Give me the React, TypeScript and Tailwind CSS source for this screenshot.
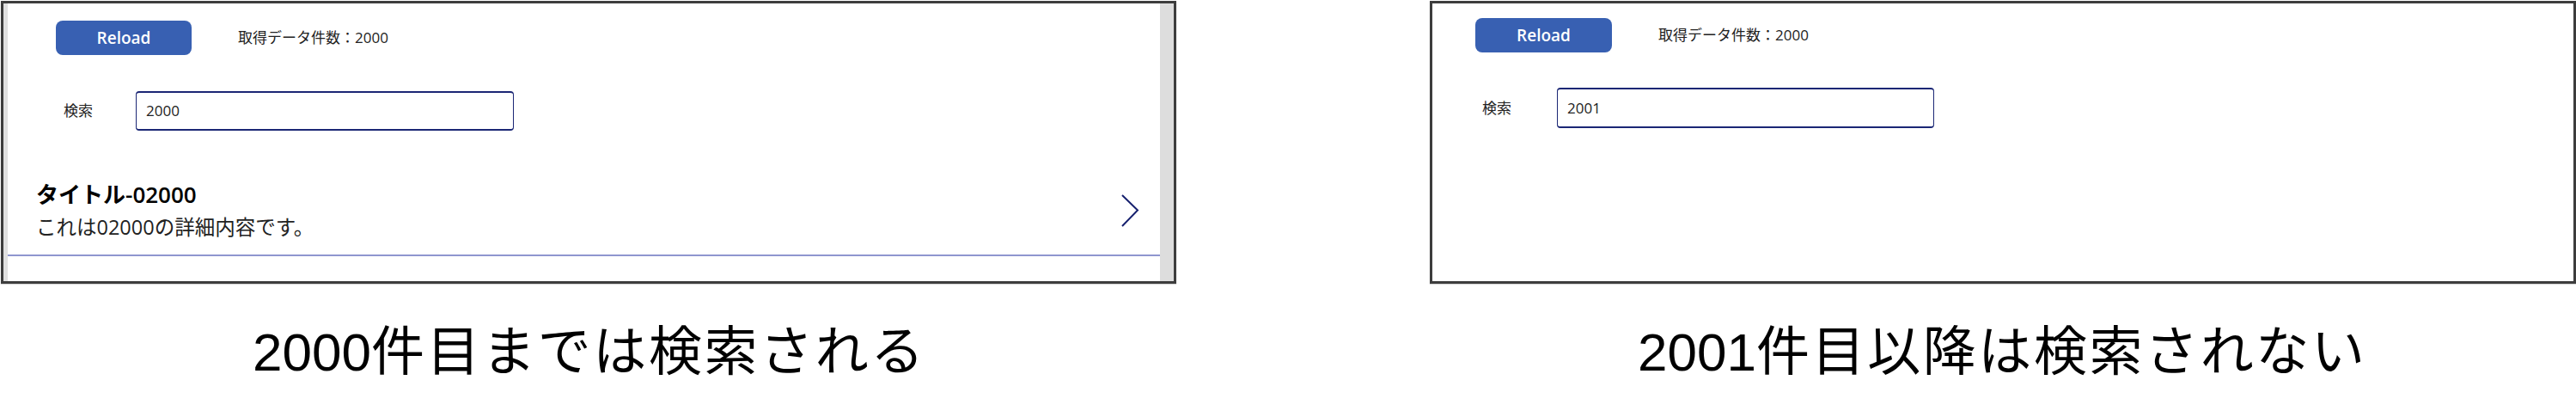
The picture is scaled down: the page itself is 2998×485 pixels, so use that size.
import React from "react";

const latin = "font-['Open_Sans','Noto_Sans_CJK_JP',sans-serif]";

function ReloadButton({ w }: { w: string }) {
  return (
    <button
      className={`${w} h-[40px] rounded-[8px] bg-[#3860b2] text-white text-[19px] font-semibold leading-none flex items-center justify-center ${latin}`}
    >
      Reload
    </button>
  );
}

function CountText() {
  return (
    <span className={`text-[17px] text-[#222] leading-none ${latin}`}>
      取得データ件数：2000
    </span>
  );
}

function SearchInput({ value, w, h }: { value: string; w: string; h: string }) {
  return (
    <div
      className={`${w} ${h} border-x border-y-2 border-[#1b2775] rounded-[4px] flex items-center pl-[11px] text-[17px] text-[#222] ${latin}`}
    >
      {value}
    </div>
  );
}

function Caption({ digits, rest }: { digits: string; rest: string }) {
  return (
    <div className="text-[62px] leading-[62px] text-black whitespace-nowrap font-['Liberation_Sans','Noto_Sans_CJK_JP',sans-serif]">
      <span>{digits}</span>
      <span className="tracking-[2.6px]">{rest}</span>
    </div>
  );
}

export default function App() {
  return (
    <div className="w-[2998px] h-[485px] bg-white relative overflow-hidden">
      {/* frames row */}
      <div className="flex pt-[1px]">
        {/* left frame */}
        <div className="ml-[1px] w-[1368px] h-[329px] border-[3px] border-[#3d3d3d] flex shadow-[0_1px_1px_rgba(0,0,0,0.15)]">
          <div className="w-[5px] bg-[#e0e0e0]" />
          <div className="flex-1 flex flex-col">
            <div className="mt-[20px] ml-[56px] flex items-center">
              <ReloadButton w="w-[158px]" />
              <div className="ml-[54px]">
                <CountText />
              </div>
            </div>
            <div className="mt-[42px] pl-[65px] flex items-center">
              <span className={`w-[84px] text-[17px] text-[#222] ${latin}`}>検索</span>
              <SearchInput value="2000" w="w-[440px]" h="h-[46px]" />
            </div>
            <div className="mt-[58px] flex items-center">
              <div className="pl-[33px] flex-1 flex flex-col">
                <div className={`h-[32px] leading-[32px] text-[26px] text-black ${latin}`}>
                  <span className="font-bold">タイトル</span>
                  <span className="font-semibold">-02000</span>
                </div>
                <div className={`mt-[6px] h-[32px] leading-[32px] text-[23.5px] text-[#222] ${latin}`}>
                  これは02000の詳細内容です。
                </div>
              </div>
              <svg width="22" height="40" viewBox="0 0 22 40" className="mr-[24px]">
                <polyline
                  points="2,2 20,19.5 2,38"
                  fill="none"
                  stroke="#16206e"
                  strokeWidth="2"
                />
              </svg>
            </div>
            <div className="mt-[16px] h-[2px] bg-[#8f96cf]" />
          </div>
          <div className="w-[16px] bg-[#dddddd]" />
        </div>

        {/* right frame */}
        <div className="ml-[295px] w-[1334px] h-[329px] border-[3px] border-[#3d3d3d] flex flex-col shadow-[0_1px_1px_rgba(0,0,0,0.15)]">
          <div className="mt-[17px] ml-[50px] flex items-center">
            <ReloadButton w="w-[159px]" />
            <div className="ml-[54px]">
              <CountText />
            </div>
          </div>
          <div className="mt-[41px] pl-[58px] flex items-center">
            <span className={`w-[87px] text-[17px] text-[#222] ${latin}`}>検索</span>
            <SearchInput value="2001" w="w-[439px]" h="h-[47px]" />
          </div>
        </div>
      </div>

      {/* captions row */}
      <div className="flex mt-[49px]">
        <div className="w-[1368px] pl-[294px]">
          <Caption digits="2000" rest="件目までは検索される" />
        </div>
        <div className="pl-[538px]">
          <Caption digits="2001" rest="件目以降は検索されない" />
        </div>
      </div>
    </div>
  );
}
